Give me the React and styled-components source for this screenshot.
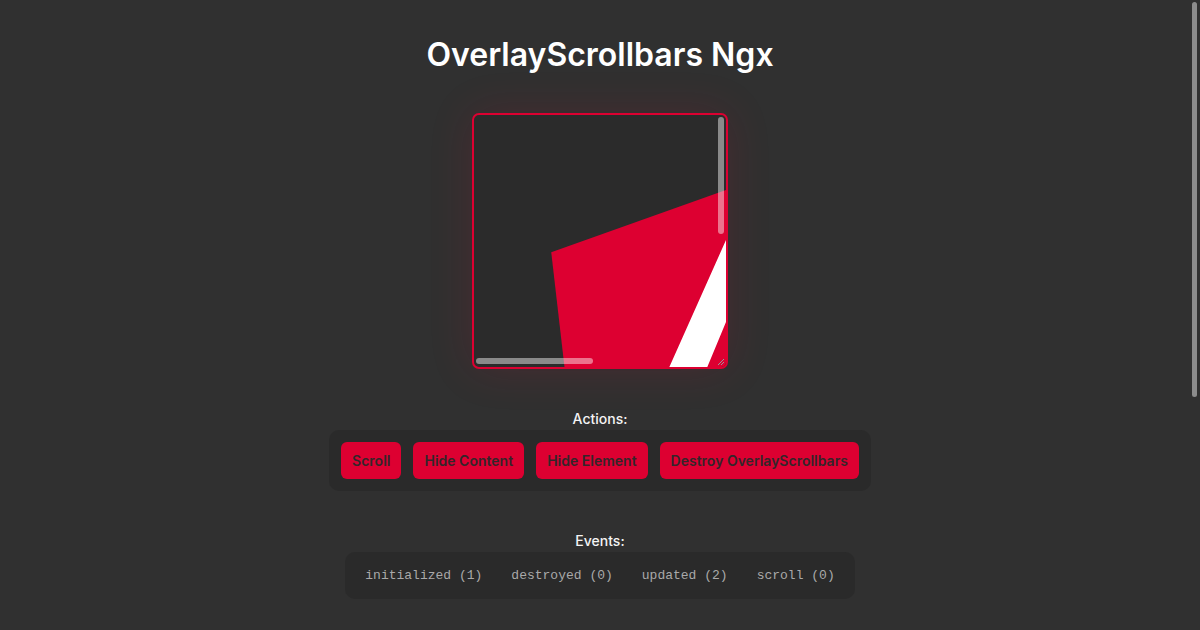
import styled, { createGlobalStyle } from "styled-components"

const GlobalStyle = createGlobalStyle`
  html, body {
    margin: 0;
    padding: 0;
    background: #303030;
    color: #f2f2f2;
    font-family: Inter, "Noto Sans", sans-serif;
    overflow: hidden;
  }
`

const actions = ["Scroll", "Hide Content", "Hide Element", "Destroy OverlayScrollbars"]
const events = [
  ["initialized", 1],
  ["destroyed", 0],
  ["updated", 2],
  ["scroll", 0],
]

const AngularLogo = () => (
  <svg width="480" height="480" viewBox="0 0 250 250">
    <polygon fill="#DD0031" points="125,30 31.9,63.2 46.1,186.3 125,230" />
    <polygon fill="#C3002F" points="125,30 218.1,63.2 203.9,186.3 125,230" />
    <path
      fill="#FFFFFF"
      d="M125,52.1L66.8,182.6h21.7l11.7-29.2h49.4l11.7,29.2h21.7L125,52.1z M142,135.4H108l17-40.9L142,135.4z"
    />
  </svg>
)

const App = () => {
  return (
    <Page>
      <GlobalStyle />
      <Title>OverlayScrollbars Ngx</Title>
      <Viewport>
        <Content>
          <AngularLogo />
        </Content>
        <Thumb $vertical />
        <Thumb />
        <Resizer width="8" height="8" viewBox="0 0 8 8">
          <path d="M7 1L1 7M7 4L4 7" stroke="#9a9a9a" strokeWidth="1" />
        </Resizer>
      </Viewport>
      <Label>Actions:</Label>
      <Panel $gap="12px" $pad="12px">
        {actions.map((a) => (
          <Button key={a}>{a}</Button>
        ))}
      </Panel>
      <Label $top="41px">Events:</Label>
      <Panel $gap="29px" $pad="15px 20px">
        {events.map(([name, count]) => (
          <Event key={name}>
            {name} ({count})
          </Event>
        ))}
      </Panel>
      <PageThumb />
    </Page>
  )
}

const Page = styled.main`
  display: flex;
  flex-direction: column;
  align-items: center;
  height: 630px;
  padding-top: 34px;
  box-sizing: border-box;
`

const Title = styled.h1`
  margin: 0;
  font-size: 32px;
  line-height: 42px;
  font-weight: 600;
  color: #ffffff;
`

const Viewport = styled.div`
  position: relative;
  margin-top: 37px;
  width: 252px;
  height: 252px;
  border: 2px solid #dd0031;
  border-radius: 7px;
  background: #2b2b2b;
  overflow: hidden;
  box-shadow: 0 0 45px rgba(221, 0, 49, 0.14);
`

const Content = styled.div`
  padding: 16px 0 0 16px;
  width: 540px;
  svg {
    display: block;
  }
`

const Thumb = styled.div`
  position: absolute;
  border-radius: 3px;
  background: rgba(255, 255, 255, 0.45);
  ${(p) =>
    p.$vertical
      ? `top: 2px; right: 2px; width: 6px; height: 117px;`
      : `left: 2px; bottom: 3px; height: 6px; width: 117px;`}
`

const Resizer = styled.svg`
  position: absolute;
  right: 1px;
  bottom: 1px;
`

const Label = styled.div`
  margin-top: ${(p) => p.$top || "41px"};
  font-size: 14px;
  line-height: 18px;
  font-weight: 500;
  color: #f4f4f4;
`

const Panel = styled.div`
  display: flex;
  gap: ${(p) => p.$gap};
  padding: ${(p) => p.$pad};
  margin-top: 2px;
  background: #2a2a2a;
  border-radius: 10px;
`

const Button = styled.button`
  height: 37px;
  padding: 0 11px;
  border: none;
  border-radius: 6px;
  background: #dd0031;
  color: #33262a;
  font-family: Inter, "Noto Sans", sans-serif;
  font-size: 14px;
  font-weight: 600;
  cursor: pointer;
`

const Event = styled.span`
  font-family: "Liberation Mono", monospace;
  font-size: 13px;
  line-height: 17px;
  color: #a9a9a9;
  white-space: pre;
`

const PageThumb = styled.div`
  position: fixed;
  top: 2px;
  right: 3px;
  width: 5px;
  height: 395px;
  border-radius: 3px;
  background: #8c8c8c;
`

export default App
